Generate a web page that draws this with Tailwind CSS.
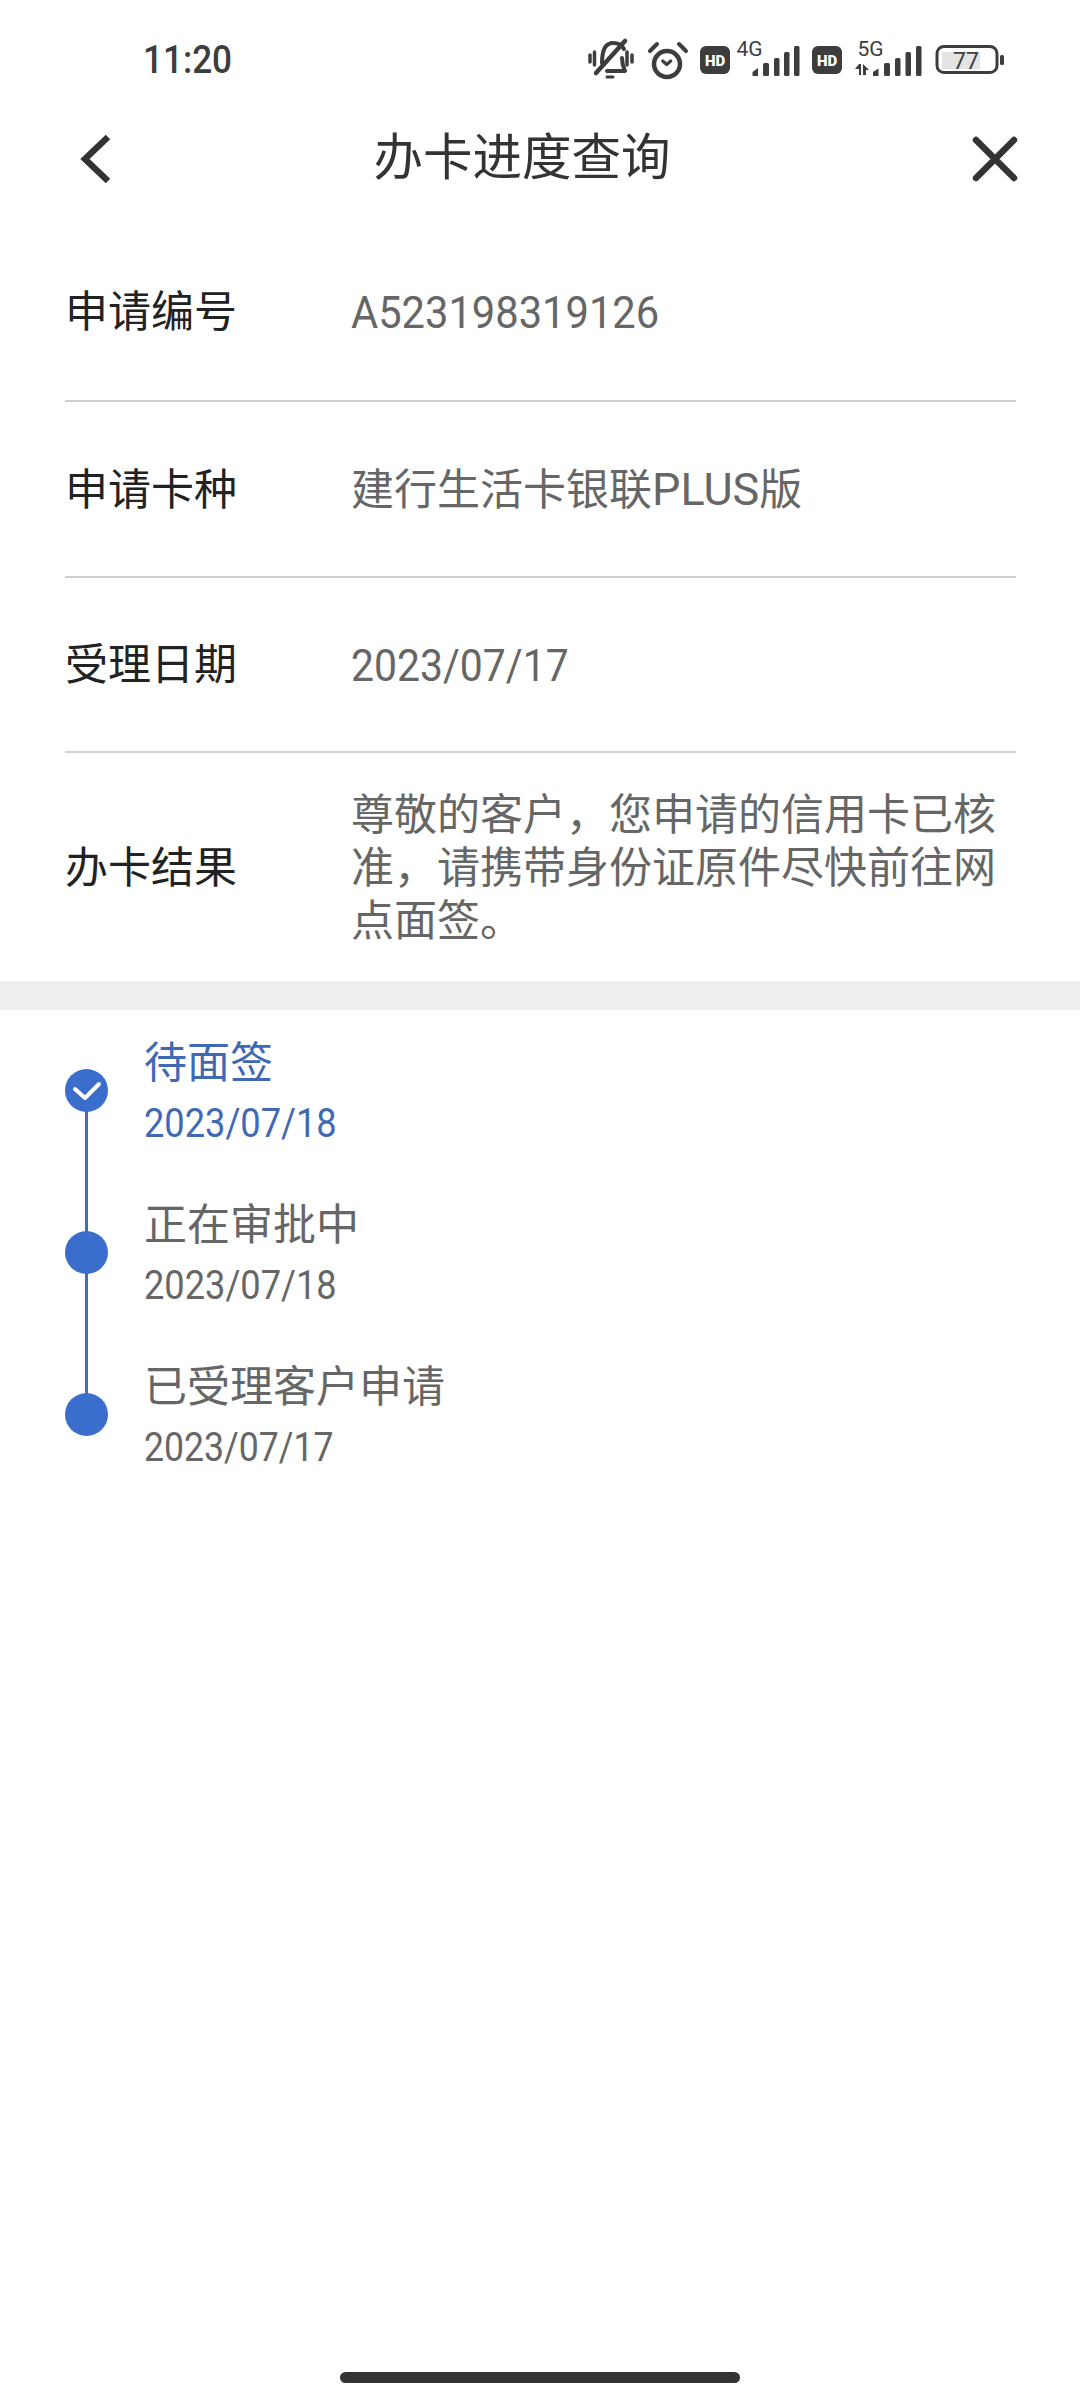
<!DOCTYPE html>
<html lang="zh"><head><meta charset="utf-8">
<script src="https://cdn.jsdelivr.net/npm/@tailwindcss/browser@4"></script></head>
<body class="bg-white">
<div class="relative w-[1080px] h-[2400px] bg-white overflow-hidden flex flex-col font-['Roboto','Noto_Sans_CJK_SC',sans-serif]">
  <!-- status bar -->
  <div class="h-[110px] flex items-center pl-[143px] pr-[70px] text-[#3d3d3d] shrink-0">
    <span class="inline-block text-[39px] font-medium leading-none mt-[11px] scale-x-[0.9] origin-left">11:20</span>
    <svg class="ml-auto" width="425" height="50" viewBox="585 30 425 50" fill="none">
      <!-- muted bell -->
      <g stroke="#3d3d3d" stroke-linecap="round" stroke-linejoin="round">
        <path d="M602 63c0-11 3-20 11-20 5 0 9 2 11 6M622 58c0 6 1 9 3 13h-18" stroke-width="4"/>
        <path d="M596 73L625 41" stroke-width="4.5"/>
        <path d="M590 55v7M594.5 52v13M627 52v13M632 55v7" stroke-width="3.5"/>
        <path d="M607 77h6" stroke-width="3"/>
      </g>
      <!-- alarm -->
      <g stroke="#3d3d3d" stroke-linecap="round" stroke-linejoin="round" fill="none">
        <circle cx="667" cy="64" r="13" stroke-width="4.5"/>
        <path d="M662.7 61l4 3.5 4-3.5" stroke-width="3.2"/>
        <path d="M650 51l7-7M686 51l-7-7" stroke-width="4"/>
      </g>
      <!-- HD 1 -->
      <rect x="700" y="46" width="30" height="28" rx="6" fill="#3d3d3d"/>
      <text x="715" y="66" text-anchor="middle" font-family="Roboto" font-weight="900" font-size="15" fill="#fff">HD</text>
      <text x="736.5" y="56" font-family="Roboto" font-size="21" fill="#3d3d3d">4G</text>
      <g fill="#3d3d3d">
        <path d="M752.5 72l5.5-4v8h-5.5z"/><rect x="763" y="63" width="6" height="13" rx="1.5"/><rect x="774" y="58" width="5.5" height="18" rx="1.5"/><rect x="784" y="52" width="5.5" height="24" rx="1.5"/><rect x="794" y="46" width="5.5" height="30" rx="1.5"/>
      </g>
      <!-- HD 2 -->
      <rect x="812" y="46" width="30" height="28" rx="6" fill="#3d3d3d"/>
      <text x="827" y="66" text-anchor="middle" font-family="Roboto" font-weight="900" font-size="15" fill="#fff">HD</text>
      <text x="857.5" y="56" font-family="Roboto" font-size="21" fill="#3d3d3d">5G</text>
      <g fill="#3d3d3d">
        <path d="M855 69l4-5v-0h2v11h-2v-6zM863 64l6 6h-3v5h-3z"/>
        <path d="M873 72l5.5-3.500v7.500h-5.500z"/><rect x="884" y="63" width="6" height="13" rx="1.5"/><rect x="895" y="58" width="5.500" height="18" rx="1.5"/><rect x="905.500" y="52" width="5.500" height="24" rx="1.5"/><rect x="916" y="46" width="5.500" height="30" rx="1.5"/>
      </g>
      <!-- battery -->
      <rect x="937" y="46.500" width="60" height="26" rx="7" stroke="#3d3d3d" stroke-width="3"/>
      <rect x="942" y="52" width="38" height="17" fill="#e4e4e4"/>
      <text x="966" y="69" text-anchor="middle" font-family="Roboto" font-size="23" fill="#3d3d3d">77</text>
      <rect x="1000" y="55" width="4" height="10" rx="1.5" fill="#3d3d3d"/>
    </svg>
  </div>
  <!-- nav -->
  <div class="relative h-[98px] flex items-center justify-center pr-[36px] shrink-0">
    <svg class="absolute left-[78px] top-[23px]" width="36" height="52" viewBox="0 0 36 52" fill="none"><path d="M30 4L7 26l23 22" stroke="#333" stroke-width="6.500" stroke-linecap="butt" stroke-linejoin="miter"/></svg>
    <span class="text-[49.5px] text-[#333] leading-none">办卡进度查询</span>
    <svg class="absolute left-[972px] top-[26px]" width="46" height="46" viewBox="0 0 46 46" fill="none"><path d="M4 4l38 38M42 4L4 42" stroke="#333" stroke-width="6.500" stroke-linecap="round"/></svg>
  </div>
  <!-- info rows -->
  <div class="pl-[65px] pr-[64px] shrink-0">
    <div class="flex items-center h-[194px] pt-[17px] border-b-2 border-[#d0d0d0]">
      <span class="w-[286px] text-[43px] text-[#222] shrink-0">申请编号</span>
      <span class="inline-block text-[44px] text-[#666] scale-x-[0.947] origin-left">A523198319126</span>
    </div>
    <div class="flex items-center h-[176px] pt-[2px] border-b-2 border-[#d0d0d0]">
      <span class="w-[286px] text-[43px] text-[#222] shrink-0">申请卡种</span>
      <span class="text-[43px] text-[#666]">建行生活卡银联<span class="text-[45px]">PLUS</span>版</span>
    </div>
    <div class="flex items-center h-[175px] pt-[2px] border-b-2 border-[#d0d0d0]">
      <span class="w-[286px] text-[43px] text-[#222] shrink-0">受理日期</span>
      <span class="inline-block text-[44px] text-[#666] scale-x-[0.93] origin-left">2023/07/17</span>
    </div>
    <div class="flex items-center h-[228px] pt-[2px]">
      <span class="w-[286px] text-[43px] text-[#222] shrink-0">办卡结果</span>
      <span class="text-[43px] leading-[53px] text-[#666] w-[660px]">尊敬的客户，您申请的信用卡已核准，请携带身份证原件尽快前往网点面签。</span>
    </div>
  </div>
  <div class="h-[29px] bg-[#eeeeee] shrink-0"></div>
  <!-- timeline -->
  <div class="pl-[65px] flex flex-col">
    <div class="flex h-[162px]">
      <div class="relative w-[43px] shrink-0">
        <div class="absolute left-[0px] top-[59px] w-[43px] h-[43px] rounded-full bg-[#3b6dcc] flex items-center justify-center">
          <svg width="30" height="22" viewBox="0 0 30 22" fill="none"><path d="M3 9l10 9L27 4" stroke="#fff" stroke-width="4" stroke-linecap="round" stroke-linejoin="round"/></svg>
        </div>
        <div class="absolute left-[20px] top-[100px] w-[3px] h-[62px] bg-[#3f6fbc]"></div>
      </div>
      <div class="ml-[36px] pt-[26px] text-[#3f69b4]">
        <div class="text-[43px] leading-[54px]">待面签</div>
        <div class="text-[40px] leading-[56px] mt-[6px] scale-x-[0.905] origin-left">2023/07/18</div>
      </div>
    </div>
    <div class="flex h-[162px]">
      <div class="relative w-[43px] shrink-0">
        <div class="absolute left-[20px] top-[0px] w-[3px] h-[162px] bg-[#3f6fbc]"></div>
        <div class="absolute left-[0px] top-[59px] w-[43px] h-[43px] rounded-full bg-[#3b6dcc]"></div>
      </div>
      <div class="ml-[36px] pt-[26px] text-[#666]">
        <div class="text-[43px] leading-[54px]">正在审批中</div>
        <div class="text-[40px] leading-[56px] mt-[6px] scale-x-[0.905] origin-left">2023/07/18</div>
      </div>
    </div>
    <div class="flex h-[162px]">
      <div class="relative w-[43px] shrink-0">
        <div class="absolute left-[20px] top-[0px] w-[3px] h-[60px] bg-[#3f6fbc]"></div>
        <div class="absolute left-[0px] top-[59px] w-[43px] h-[43px] rounded-full bg-[#3b6dcc]"></div>
      </div>
      <div class="ml-[36px] pt-[26px] text-[#666]">
        <div class="text-[43px] leading-[54px]">已受理客户申请</div>
        <div class="text-[40px] leading-[56px] mt-[6px] scale-x-[0.89] origin-left">2023/07/17</div>
      </div>
    </div>
  </div>
  <div class="absolute left-[340px] top-[2372px] w-[400px] h-[11px] rounded-full bg-[#333]"></div>
</div>
</body></html>
